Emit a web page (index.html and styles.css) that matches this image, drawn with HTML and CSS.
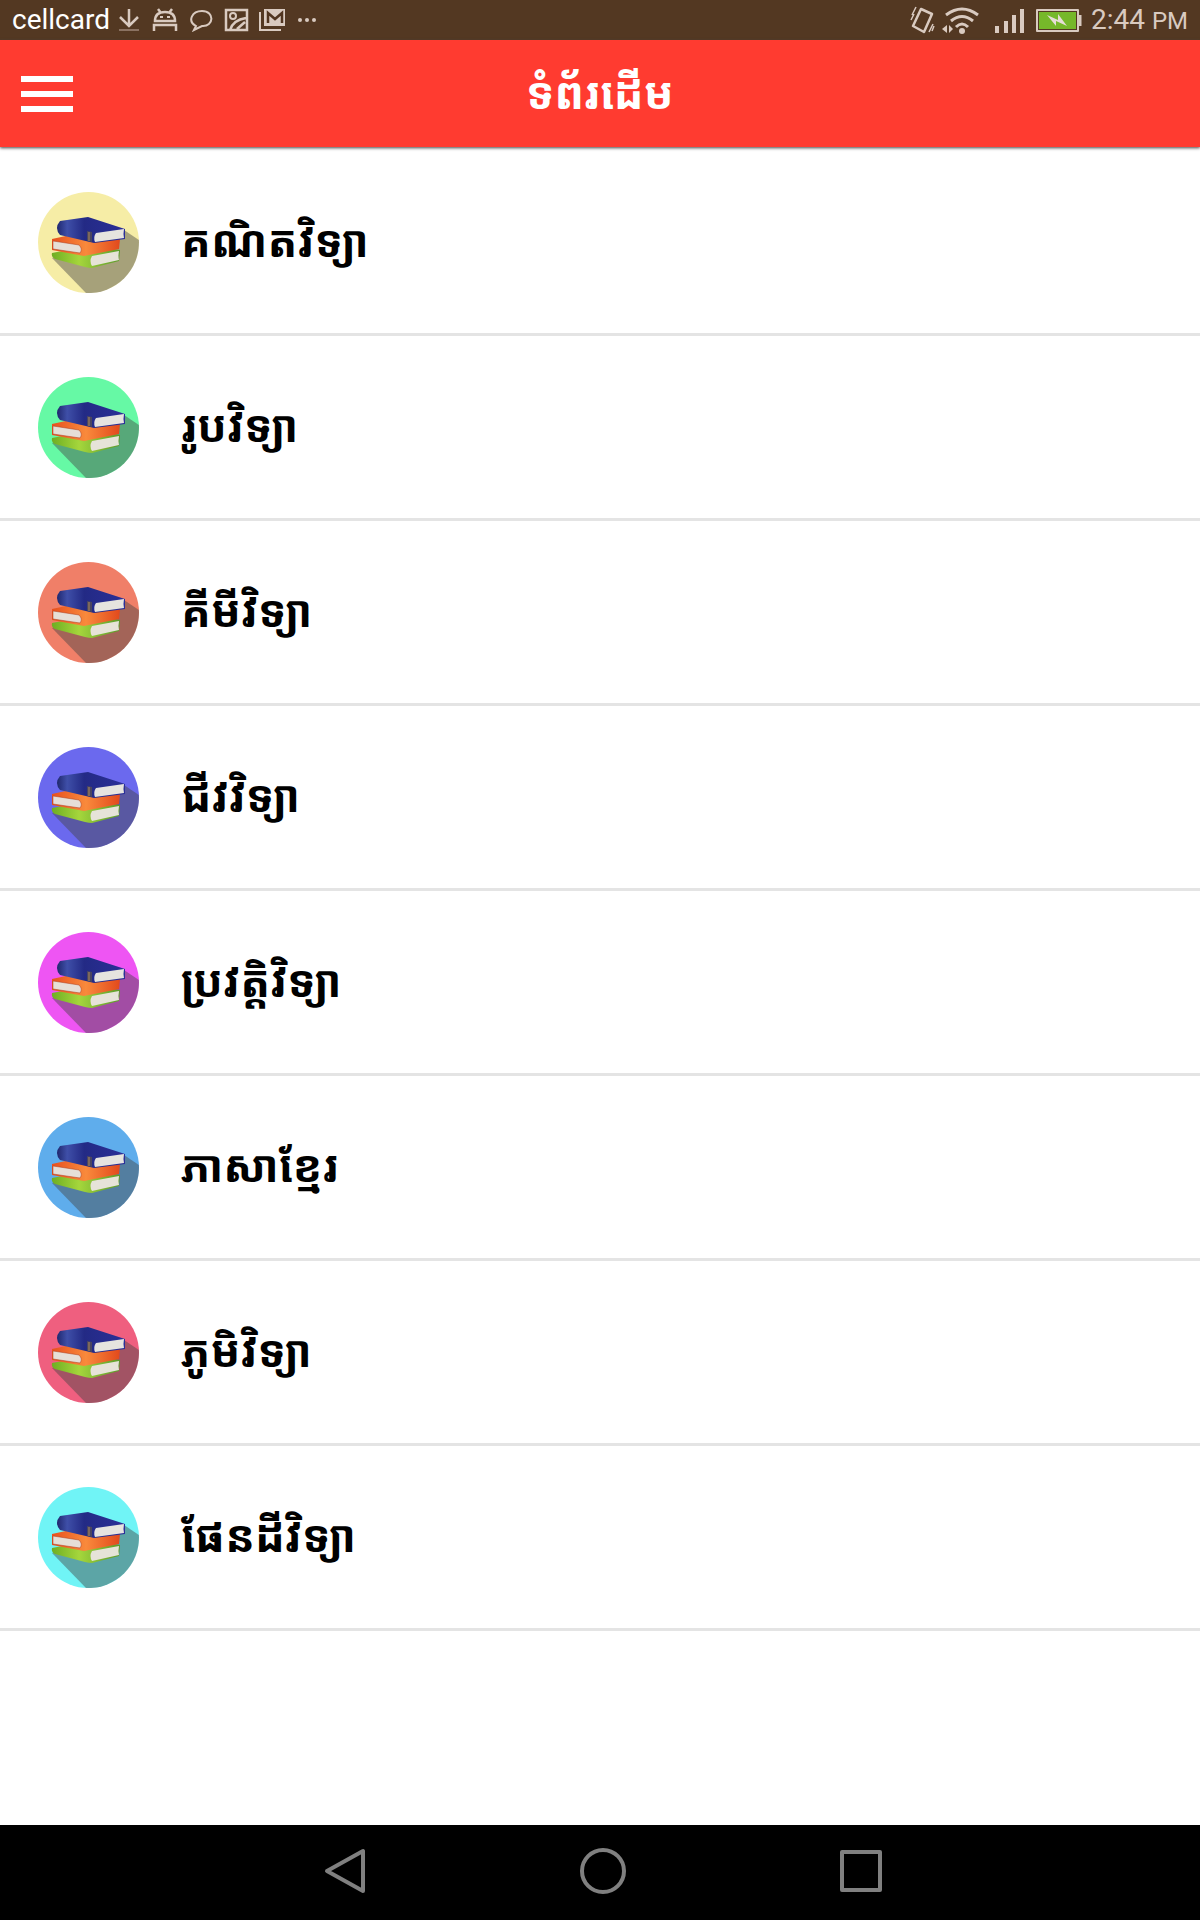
FILE: index.html
```html
<!DOCTYPE html>
<html lang="km">
<head>
    <meta charset="UTF-8">
    <meta name="viewport" content="width=device-width, initial-scale=1.0">
    <title>ទំព័រដើម</title>
    <link rel="stylesheet" href="styles.css">
</head>
<body>
    <!-- shared book icon -->
    <svg class="sprite" aria-hidden="true">
      <defs>
        <linearGradient id="blue" x1="0" y1="0" x2="1" y2="0">
          <stop offset="0" stop-color="#20286f"/>
          <stop offset=".15" stop-color="#3f4fa8"/>
          <stop offset=".4" stop-color="#232a85"/>
          <stop offset="1" stop-color="#2b2f98"/>
        </linearGradient>
        <linearGradient id="orange" x1="0" y1="0" x2="1" y2="0">
          <stop offset="0" stop-color="#e8501e"/>
          <stop offset=".5" stop-color="#f98a3c"/>
          <stop offset="1" stop-color="#e2491c"/>
        </linearGradient>
        <linearGradient id="green" x1="0" y1="0" x2="1" y2="0">
          <stop offset="0" stop-color="#6eae22"/>
          <stop offset=".4" stop-color="#a5d63c"/>
          <stop offset="1" stop-color="#5b9a2a"/>
        </linearGradient>
      </defs>
      <symbol id="books" viewBox="0 0 101 101">
        <circle cx="50.500" cy="50.500" r="50.500" fill="currentColor"/>
        <path d="M86 38L100.900 48A50.500 50.500 0 0 1 48 101L14 66L50 50Z" fill="#444" opacity=".45"/>
        <path d="M14 61L50 54L82 58L81 69L54 76Q51 76 47 75L17 67Q13 65 14 61Z" fill="url(#green)"/>
        <path d="M54 64L81 59Q80 64 81 68L54 74Q51 69 54 64Z" fill="#e6e3d8"/>
        <path d="M14 47L46 40L82 47L81 57L46 64L14 58Z" fill="url(#orange)"/>
        <path d="M15 49L41 53Q45 57 42 61L15 57Z" fill="#e6dfd7" stroke="#a83a1c" stroke-width=".5"/>
        <path d="M22 29L50 25L87 37V47L56 51L52 50L22 43Q16 36 22 29Z" fill="url(#blue)"/>
        <path d="M49 39L54 40V50L49 49Z" fill="#4a4660"/>
        <path d="M51 40V49" stroke="#b08a58" stroke-width="1"/>
        <path d="M58 41L86 37Q85 42 86 46L57 50Q55 45 58 41Z" fill="#e6e4df"/>
      </symbol>
    </svg>

    <div class="screen">
      <div class="status">
        <div class="status-group">
          <span class="carrier">cellcard</span>
          <svg class="glyphs" width="202" height="24" viewBox="0 0 202 24" fill="none" stroke="#d9cac0" stroke-width="2">
            <path d="M10 1V18M1 9L10 18L19 9" stroke-width="2.500"/>
            <path d="M0 22H20" stroke="#8b7262"/>
            <path d="M36 13Q36 4 46 4T56 13ZM39 1L42 5M53 1L50 5M35 23V17H57V23" stroke-width="2.500"/>
            <path d="M41 9H44M48 9H51"/>
            <path d="M75 22L77 18C68 13 73 3 83 3C96 3 95 19 83 18Z"/>
            <path d="M107 2H128V22H107ZM111 22Q114 12 127 10M118 21L126 14" stroke-width="2.500"/>
            <circle cx="114" cy="8" r="3"/>
            <path d="M141 4V22H162"/>
            <path d="M145 1H166V18H145Z" fill="#d9cac0" stroke="none"/>
            <path d="M149 15V5L156 11L163 5V15" stroke="#50341f" stroke-width="2.500"/>
            <circle cx="181" cy="12" r="2" fill="#d9cac0" stroke="none"/>
            <circle cx="188" cy="12" r="2" fill="#d9cac0" stroke="none"/>
            <circle cx="195" cy="12" r="2" fill="#d9cac0" stroke="none"/>
          </svg>
        </div>
        <div class="status-group">
          <svg class="glyphs" width="172" height="28" viewBox="0 0 172 28" fill="none" stroke="#d9cac0" stroke-width="2">
            <path d="M11 3L22 8L14 26L3 20Z" stroke-width="2.500" stroke-linejoin="round"/>
            <path d="M2 9L6 1M1 14L4 8M19 26L23 18M22 25L24 20" stroke-width="1.500"/>
            <path d="M36 9Q52 -3 68 9M41 15Q52 6 63 15M46 21Q52 15 58 21" stroke-width="3"/>
            <circle cx="52" cy="25" r="3" fill="#d9cac0" stroke="none"/>
            <path d="M37 19V27L32 23ZM39 19V27L43 23Z" fill="#d9cac0" stroke="none"/>
            <path d="M87 20V27M96 15V27M104 9V27M112 3V27" stroke-width="4"/>
            <path d="M127 4H168V25H127Z" stroke-linejoin="round"/>
            <path d="M129 6H166V23H129Z" fill="#76b82a" stroke="none"/>
            <path d="M170 9V20" stroke-width="3"/>
            <path d="M137 9L148 14L148 8L157 20L146 15V20Z" fill="#e6ddd6" stroke="none"/>
          </svg>
          <time class="clock">2:44 <small>PM</small></time>
        </div>
      </div>

      <header class="toolbar">
        <button class="menu" type="button" aria-label="Menu"><i></i><i></i><i></i></button>
        <h1>ទំព័រដើម</h1>
      </header>

      <main>
        <ul class="subjects">
          <li><a href="#"><svg class="math"><use href="#books"/></svg><span>គណិតវិទ្យា</span></a></li>
          <li><a href="#"><svg class="physics"><use href="#books"/></svg><span>រូបវិទ្យា</span></a></li>
          <li><a href="#"><svg class="chemistry"><use href="#books"/></svg><span>គីមីវិទ្យា</span></a></li>
          <li><a href="#"><svg class="biology"><use href="#books"/></svg><span>ជីវវិទ្យា</span></a></li>
          <li><a href="#"><svg class="history"><use href="#books"/></svg><span>ប្រវត្តិវិទ្យា</span></a></li>
          <li><a href="#"><svg class="khmer"><use href="#books"/></svg><span>ភាសាខ្មែរ</span></a></li>
          <li><a href="#"><svg class="geography"><use href="#books"/></svg><span>ភូមិវិទ្យា</span></a></li>
          <li><a href="#"><svg class="earth"><use href="#books"/></svg><span>ផែនដីវិទ្យា</span></a></li>
        </ul>
      </main>

      <nav class="navbar">
        <button type="button" aria-label="Back"><svg width="48" height="48" viewBox="0 0 48 48"><path d="M42 4V44L6 24Z"/></svg></button>
        <button type="button" aria-label="Home"><svg width="48" height="48" viewBox="0 0 48 48"><circle cx="24" cy="24" r="21"/></svg></button>
        <button type="button" aria-label="Recent"><svg width="48" height="48" viewBox="0 0 48 48"><path d="M5 5H43V43H5Z"/></svg></button>
      </nav>
    </div>
</body>
</html>
```

FILE: styles.css
```css
*,
*:before,
*:after {
  box-sizing: border-box;
}

body {
  margin: 0;
  font-family: Roboto, "Noto Sans Khmer", "Khmer OS", "DejaVu Sans", sans-serif;
  background: #fff;
}

button {
  padding: 0;
  border: 0;
  background: none;
}

.sprite {
  position: absolute;
  width: 0;
  height: 0;
}

.screen {
  display: flex;
  flex-direction: column;
  min-height: 100vh;
}

.status {
  display: flex;
  justify-content: space-between;
  height: 40px;
  padding: 0 12px;
  background: #533822;
}

.status-group {
  display: flex;
  align-items: center;
  gap: 9px;
}

.carrier {
  font-size: 28px;
  line-height: 40px;
  color: #fff;
}

.clock {
  font-size: 28px;
  line-height: 40px;
  color: #d9cac0;
}

.clock small {
  font-size: 24px;
}

.toolbar {
  display: grid;
  grid-template-columns: 1fr auto 1fr;
  align-items: center;
  height: 107px;
  padding: 0 21px;
  background: #ff3b30;
  box-shadow: 0 1px 3px #444;
}

.toolbar h1 {
  margin: 0;
  font-size: 44px;
  font-weight: 700;
  line-height: 60px;
  color: #fff;
}

.menu {
  display: flex;
  flex-direction: column;
  gap: 9px;
  width: 52px;
}

.menu i {
  width: 100%;
  height: 6px;
  background: #fff;
}

main {
  flex: 1;
}

.subjects {
  margin: 0;
  padding: 4px 0 0;
  list-style: none;
}

.subjects a {
  display: flex;
  align-items: center;
  gap: 42px;
  height: 185px;
  padding: 0 38px;
  border-bottom: 3px solid #e4e4e4;
  font-size: 44px;
  font-weight: 700;
  line-height: 60px;
  color: #000;
  text-decoration: none;
}

.subjects svg {
  width: 101px;
  height: 101px;
}

.math { color: #f6eda6; }
.physics { color: #66f9a5; }
.chemistry { color: #f07f68; }
.biology { color: #6b69ee; }
.history { color: #ee55f3; }
.khmer { color: #5fadec; }
.geography { color: #ef5f7f; }
.earth { color: #70f4f6; }

.navbar {
  display: flex;
  justify-content: center;
  gap: 210px;
  height: 95px;
  padding: 0 0 4px 5px;
  background: #000;
}

.navbar svg {
  display: block;
  fill: none;
  stroke: #808080;
  stroke-width: 4;
  stroke-linejoin: round;
}
```
